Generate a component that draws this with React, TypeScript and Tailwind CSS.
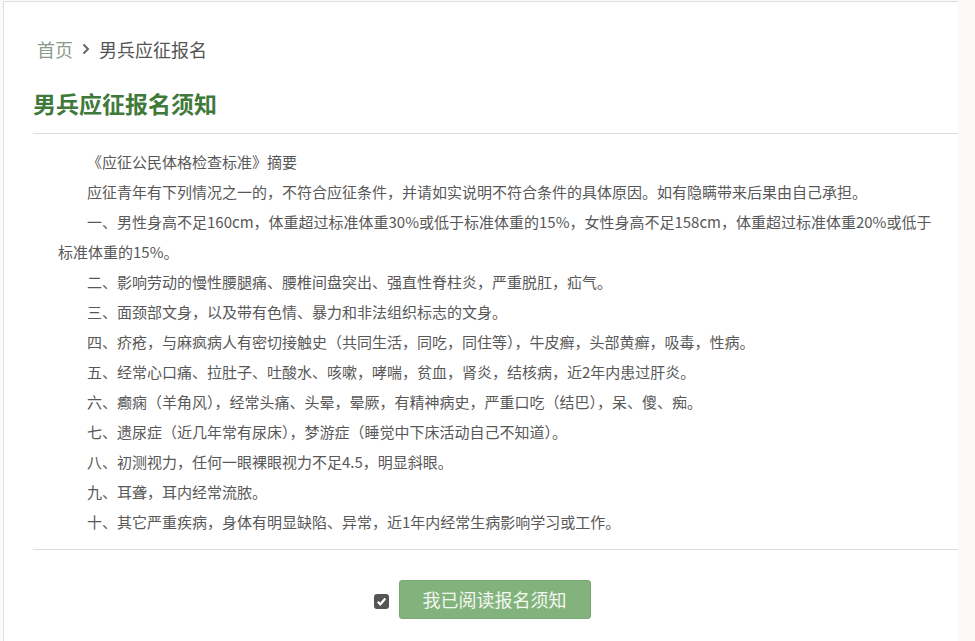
import React from "react";

const lines: React.ReactNode[] = [
  "《应征公民体格检查标准》摘要",
  "应征青年有下列情况之一的，不符合应征条件，并请如实说明不符合条件的具体原因。如有隐瞒带来后果由自己承担。",
  <>
    一、男性身高不足160cm，体重超过标准体重30%或低于标准体重的15%，女性身高不足158cm，体重超过标准体重20%或低于
    <br />
    标准体重的15%。
  </>,
  "二、影响劳动的慢性腰腿痛、腰椎间盘突出、强直性脊柱炎，严重脱肛，疝气。",
  "三、面颈部文身，以及带有色情、暴力和非法组织标志的文身。",
  "四、疥疮，与麻疯病人有密切接触史（共同生活，同吃，同住等），牛皮癣，头部黄癣，吸毒，性病。",
  "五、经常心口痛、拉肚子、吐酸水、咳嗽，哮喘，贫血，肾炎，结核病，近2年内患过肝炎。",
  "六、癫痫（羊角风），经常头痛、头晕，晕厥，有精神病史，严重口吃（结巴），呆、傻、痴。",
  "七、遗尿症（近几年常有尿床），梦游症（睡觉中下床活动自己不知道）。",
  "八、初测视力，任何一眼裸眼视力不足4.5，明显斜眼。",
  "九、耳聋，耳内经常流脓。",
  "十、其它严重疾病，身体有明显缺陷、异常，近1年内经常生病影响学习或工作。",
];

export default function App() {
  return (
    <div
      className="w-[975px] h-[641px] bg-[#fbfaf6] overflow-hidden"
      style={{ fontFamily: '"Noto Sans CJK SC", "Noto Sans", sans-serif' }}
    >
      <div className="ml-[3px] mt-[1px] w-[955px] h-[640px] bg-white border-l border-t border-[#dedede]">
        <div className="pl-[29px]">
          <div className="pt-[34px] h-[60px] flex items-center text-[18px] leading-[24px] text-[#555]">
            <span className="ml-[4px] text-[#8c9a8c]">首页</span>
            <svg width="10" height="14" viewBox="0 0 10 14" className="mx-[8px]">
              <path d="M2.5 2.5 L7 7 L2.5 11.5" fill="none" stroke="#666" strokeWidth="2" />
            </svg>
            <span>男兵应征报名</span>
          </div>
          <div className="mt-[26px] h-[30px] flex items-center">
            <h1 className="text-[23px] leading-[30px] font-bold text-[#3f7a3a]">男兵应征报名须知</h1>
          </div>
          <div className="mt-[15px] border-t border-[#dcdcdc]" />
          <div className="pt-[13px] pb-[12px] pl-[25px] pr-[4px] text-[15px] leading-[30px] text-[#585858] whitespace-nowrap">
            {lines.map((l, i) => (
              <p key={i} className="indent-[29px]">
                {l}
              </p>
            ))}
          </div>
          <div className="border-t border-[#dcdcdc]" />
          <div className="mt-[30px] flex items-center justify-center pr-[27px]">
            <div className="w-[15px] h-[15px] rounded-[3px] bg-[#555] flex items-center justify-center mr-[10px] mt-[4px]">
              <svg width="11" height="11" viewBox="0 0 11 11">
                <path d="M1.8 5.8 L4.3 8.3 L9.3 2.6" fill="none" stroke="#fff" strokeWidth="2.2" />
              </svg>
            </div>
            <button className="w-[192px] h-[39px] rounded-[3px] bg-[#82b37c] text-[#f3f7f1] text-[18px] leading-[37px] border border-[#79a873]">
              我已阅读报名须知
            </button>
          </div>
        </div>
      </div>
    </div>
  );
}
